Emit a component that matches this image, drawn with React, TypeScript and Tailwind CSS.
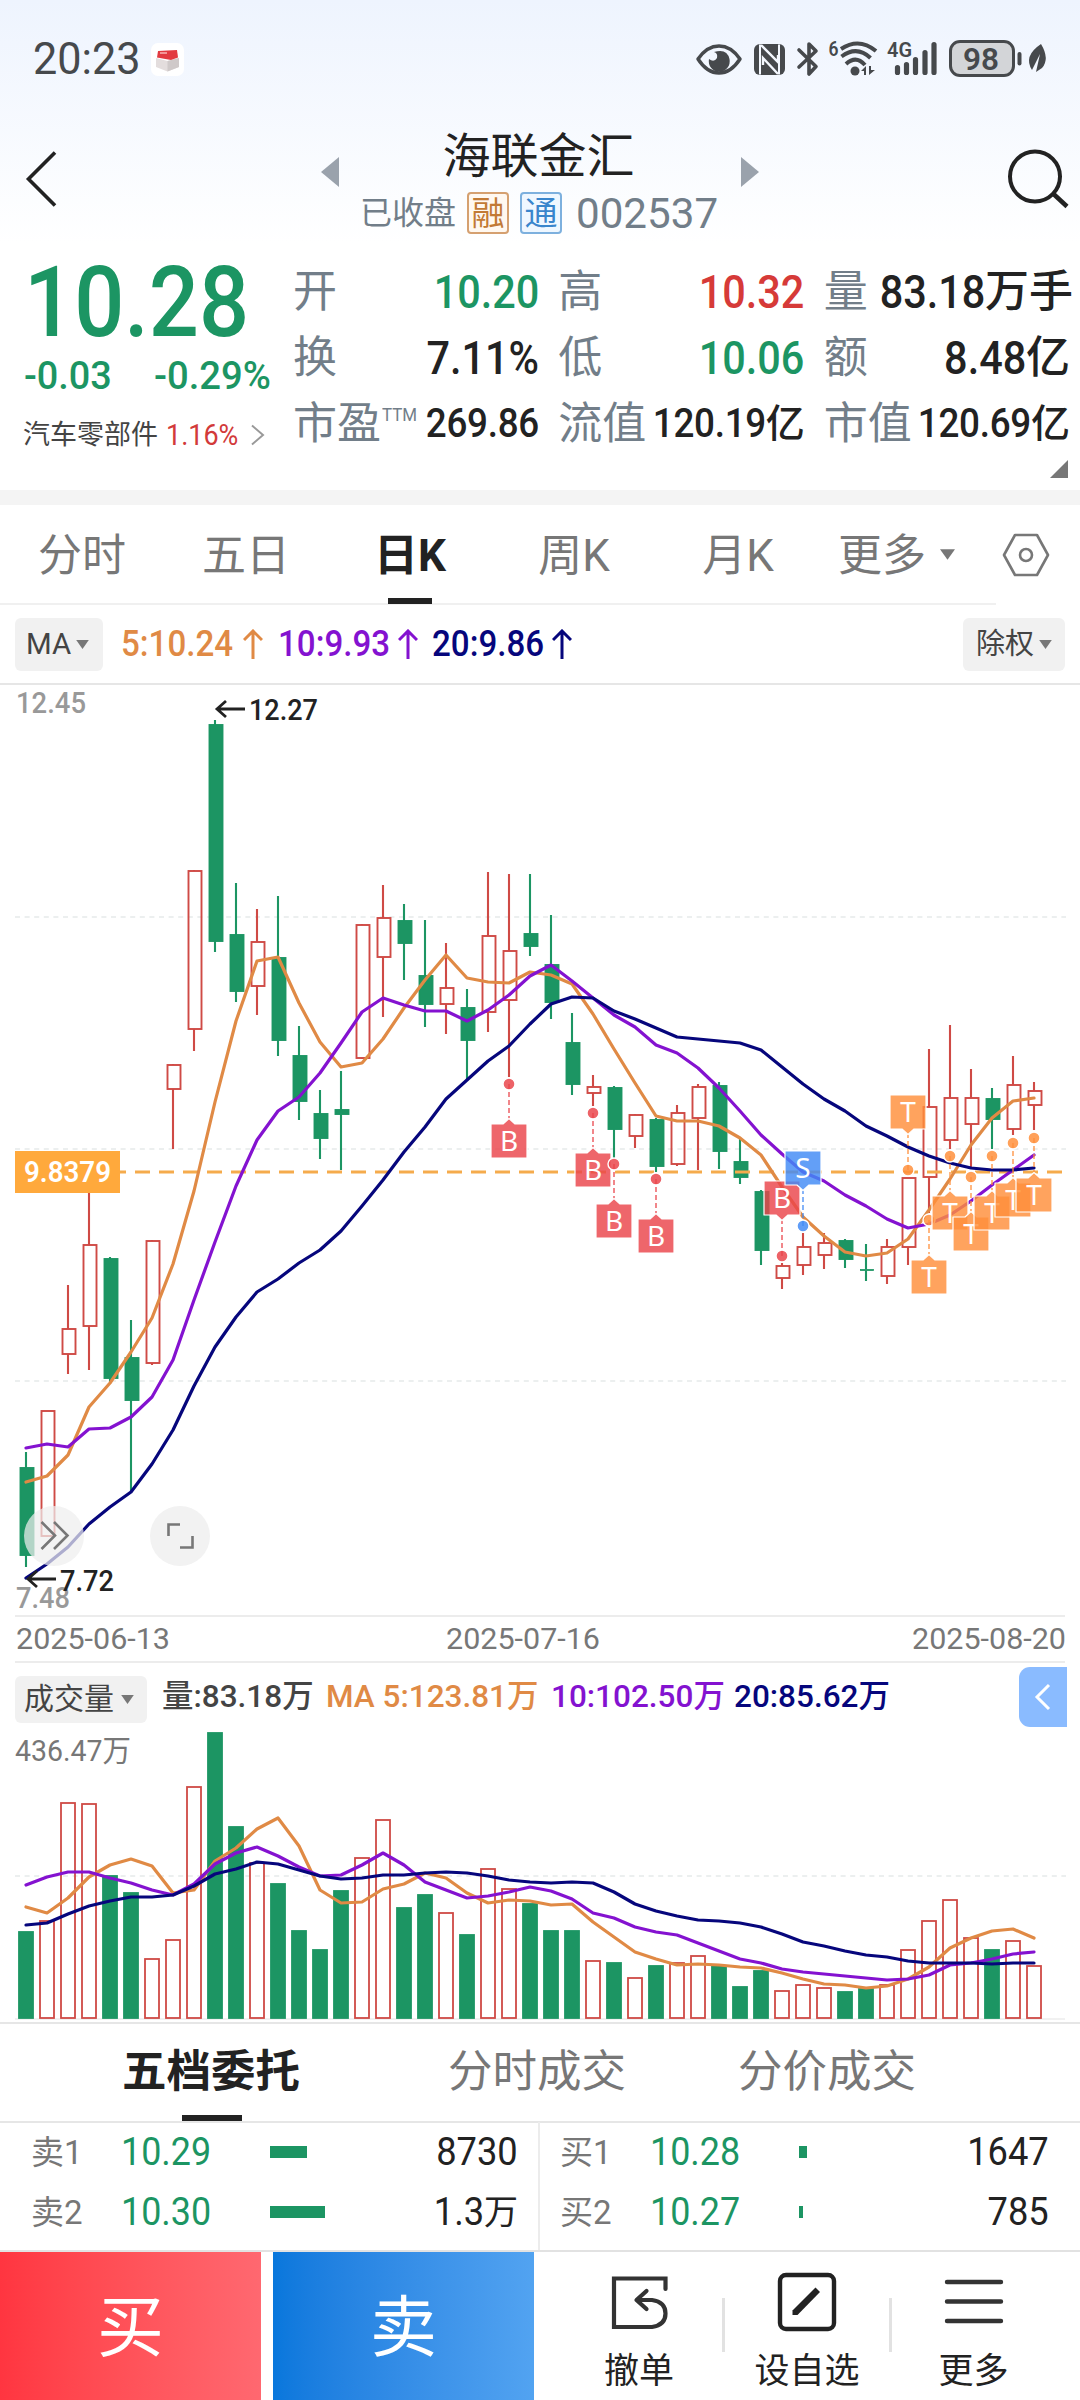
import React from 'react';
import clsx from 'clsx';

// [high, body top, body bottom, low, rising]
const candles: [number, number, number, number, 0 | 1][] = [
  [1452, 1468, 1555, 1567, 0], [1411, 1411, 1536, 1537, 1], [1285, 1329, 1354, 1374, 1],
  [1188, 1245, 1326, 1370, 1], [1257, 1259, 1378, 1382, 0], [1320, 1358, 1400, 1492, 0],
  [1240, 1241, 1363, 1365, 1], [1064, 1065, 1089, 1149, 1], [870, 871, 1029, 1051, 1],
  [720, 725, 941, 952, 0], [883, 935, 991, 1002, 0], [909, 942, 986, 1015, 1],
  [896, 958, 1040, 1056, 0], [1026, 1056, 1101, 1120, 0], [1090, 1114, 1138, 1159, 0],
  [1071, 1110, 1114, 1170, 0], [924, 925, 1058, 1059, 1], [885, 918, 957, 1017, 1],
  [904, 921, 943, 980, 0], [920, 976, 1004, 1027, 0], [943, 988, 1004, 1034, 1],
  [989, 1008, 1040, 1079, 0], [872, 936, 1012, 1032, 1], [874, 951, 1000, 1077, 1],
  [874, 934, 946, 956, 0], [915, 965, 1002, 1019, 0], [1013, 1043, 1084, 1095, 0],
  [1075, 1087, 1093, 1106, 1], [1086, 1088, 1129, 1158, 0], [1114, 1115, 1136, 1148, 1],
  [1118, 1120, 1166, 1172, 0], [1105, 1113, 1164, 1166, 1], [1084, 1087, 1118, 1170, 1],
  [1082, 1086, 1151, 1169, 0], [1137, 1162, 1177, 1184, 0], [1190, 1192, 1250, 1265, 0],
  [1263, 1266, 1278, 1289, 1], [1233, 1247, 1265, 1275, 1], [1233, 1243, 1255, 1269, 1],
  [1239, 1241, 1259, 1268, 0], [1244, 1269.5, 1270.5, 1281, 0], [1239, 1247, 1276, 1284, 1],
  [1178, 1178, 1247, 1265, 1], [1049, 1107, 1177, 1213, 1], [1025, 1098, 1140, 1149, 1],
  [1069, 1098, 1124, 1167, 1], [1088, 1099, 1119, 1149, 0], [1056, 1085, 1129, 1135, 1],
  [1082, 1091, 1105, 1130, 1],
];

const ma5 = [1482, 1476, 1455, 1407, 1383, 1352, 1318, 1264, 1191, 1102, 1021, 961, 957, 1003, 1042, 1067, 1063, 1039, 1008, 980, 955, 978, 982, 983, 972, 975, 984, 1014, 1049, 1083, 1116, 1121, 1121, 1126, 1138, 1155, 1187, 1217, 1236, 1252, 1256, 1253, 1239, 1210, 1179, 1145, 1118, 1101, 1098];
const ma10 = [1448, 1444, 1447, 1429, 1428, 1417, 1397, 1360, 1300, 1242, 1186, 1140, 1111, 1097, 1073, 1043, 1012, 998, 1005, 1011, 1011, 1021, 1010, 995, 976, 965, 981, 998, 1015, 1027, 1045, 1053, 1068, 1088, 1111, 1135, 1154, 1172, 1181, 1195, 1206, 1219, 1228, 1224, 1215, 1201, 1185, 1170, 1155];
const ma20 = [1578, 1564, 1547, 1524, 1507, 1492, 1464, 1430, 1386, 1347, 1317, 1292, 1279, 1263, 1250, 1231, 1206, 1180, 1152, 1127, 1099, 1080, 1061, 1046, 1024, 1004, 997, 998, 1011, 1019, 1028, 1037, 1039, 1041, 1043, 1050, 1067, 1084, 1099, 1111, 1126, 1136, 1147, 1156, 1163, 1168, 1170, 1170, 1168];

const volumes = [1931, 1920, 1802, 1803, 1875, 1892, 1958, 1939, 1786, 1732, 1826, 1862, 1883, 1930, 1949, 1890, 1857, 1819, 1907, 1894, 1912, 1934, 1868, 1888, 1903, 1930, 1930, 1960, 1962, 1977, 1965, 1962, 1955, 1965, 1986, 1970, 1990, 1984, 1987, 1991, 1988, 1984, 1949, 1920, 1899, 1937, 1949, 1940, 1965];
const vol5 = [1907, 1913, 1898, 1877, 1865, 1859, 1866, 1893, 1890, 1861, 1848, 1829, 1818, 1846, 1890, 1903, 1902, 1889, 1884, 1873, 1878, 1893, 1903, 1900, 1901, 1905, 1904, 1922, 1937, 1952, 1959, 1965, 1964, 1965, 1967, 1968, 1973, 1979, 1984, 1985, 1988, 1986, 1979, 1967, 1948, 1938, 1931, 1929, 1938];
const vol10 = [1885, 1877, 1872, 1872, 1878, 1883, 1890, 1895, 1884, 1864, 1853, 1847, 1856, 1867, 1876, 1875, 1865, 1853, 1865, 1882, 1890, 1898, 1896, 1892, 1887, 1891, 1899, 1913, 1918, 1927, 1932, 1935, 1943, 1951, 1959, 1963, 1969, 1972, 1974, 1976, 1978, 1980, 1979, 1975, 1965, 1963, 1959, 1954, 1952];
const vol20 = [1925, 1923, 1914, 1906, 1901, 1897, 1897, 1895, 1886, 1874, 1869, 1862, 1864, 1870, 1876, 1879, 1878, 1875, 1875, 1873, 1872, 1873, 1876, 1880, 1882, 1883, 1882, 1883, 1892, 1904, 1911, 1916, 1920, 1921, 1923, 1927, 1934, 1942, 1946, 1951, 1955, 1957, 1961, 1963, 1963, 1963, 1964, 1963, 1963];

// [candle index, dot y, letter, box above the dot]
const markers: [number, number, 'B' | 'S' | 'T', boolean][] = [
  [23, 1084, 'B', false], [27, 1113, 'B', false], [28, 1164, 'B', false], [30, 1179, 'B', false],
  [36, 1256, 'B', true], [37, 1226, 'S', true], [42, 1170, 'T', true], [43, 1220, 'T', false],
  [44, 1156, 'T', false], [45, 1177, 'T', false], [46, 1156, 'T', false], [47, 1143, 'T', false],
  [48, 1138, 'T', false],
];

const markerColor = { B: '#ea444a', S: '#418af5', T: '#ff8f3a' };

const GREEN = '#1c9563';
const RED = '#cf4a45';

const cx = (i: number) => 26 + i * 21;
const toPoints = (ys: number[]) => ys.map((y, i) => `${cx(i)},${y}`).join(' ');

function Line({ ys, color }: { ys: number[]; color: string }) {
  return <polyline points={toPoints(ys)} fill="none" stroke={color} strokeWidth="3.2" strokeLinejoin="round" strokeLinecap="round" />;
}

interface ChartTextProps {
  x: number;
  y: number;
  w: number;
  fill: string;
  size?: number;
  weight?: number;
  children: string;
}

function ChartText({ x, y, w, fill, size = 30, weight = 400, children }: ChartTextProps) {
  return (
    <text x={x} y={y} textLength={w} lengthAdjust="spacingAndGlyphs" fill={fill} fontSize={size} fontWeight={weight}>
      {children}
    </text>
  );
}

function Marker({ index, y, letter, above }: { index: number; y: number; letter: 'B' | 'S' | 'T'; above: boolean }) {
  const x = cx(index);
  const color = markerColor[letter];
  const top = above ? y - 75 : y + 40;
  const edge = above ? top + 34 : top;
  const tip = above ? edge + 5.5 : edge - 5.5;
  const box = above
    ? `M${x - 18} ${top}h36v34h-12l-6 5.5l-6 -5.5h-12z`
    : `M${x - 18} ${top}h12l6 -5.5l6 5.5h12v34h-36z`;
  return (
    <g>
      <path d={`M${x} ${y}V${tip}`} stroke={color} strokeWidth="1.6" strokeDasharray="5 3" opacity="0.8" />
      <circle cx={x} cy={y} r="6" fill={color} stroke="#fff" strokeWidth="1.4" fillOpacity="0.84" />
      <path d={box} fill={color} fillOpacity="0.82" stroke="#fff" strokeWidth="1.2" strokeLinejoin="round" />
      <text x={x} y={top + 27} textAnchor="middle" fill="#fff" fontSize="28" fontFamily="Noto Sans">
        {letter}
      </text>
    </g>
  );
}

function PriceChart() {
  return (
    <svg viewBox="0 685 1080 979" className="block w-[1080px] h-[979px]">
      {[917, 1149, 1381].map((y) => (
        <path key={y} d={`M15 ${y}H1066`} stroke="#ecefef" strokeWidth="1.8" strokeDasharray="5 4.6" />
      ))}
      <path d="M15 1616H1065M15 1662H1065" stroke="#ececec" strokeWidth="2" />
      <ChartText x={16} y={713} w={70} fill="#999" weight={500}>12.45</ChartText>
      <ChartText x={16} y={1608} w={54} fill="#999" weight={500}>7.48</ChartText>
      {candles.map(([high, top, bottom, low, up], i) => (
        <g key={i} stroke={up ? RED : GREEN}>
          <path d={`M${cx(i)} ${high}V${top}M${cx(i)} ${bottom}V${low}`} strokeWidth="2.1" />
          <rect
            x={cx(i) - 5.5}
            y={top}
            width="13"
            height={bottom - top}
            fill={up ? 'none' : GREEN}
            strokeWidth={bottom - top < 2 ? 0.8 : 1.9}
          />
        </g>
      ))}
      <path d="M15 1172H1065" stroke="#f5ab4c" strokeWidth="3" strokeDasharray="15 9" />
      <Line ys={ma5} color="#e08a45" />
      <Line ys={ma10} color="#8412d0" />
      <Line ys={ma20} color="#06067c" />
      <rect x="15" y="1151" width="105" height="42" fill="#ffa93c" />
      <ChartText x={24} y={1182} w={87} fill="#fff" weight={600}>9.8379</ChartText>
      {markers.map(([index, y, letter, above]) => (
        <Marker key={index} index={index} y={y} letter={letter} above={above} />
      ))}
      <g fill="none" stroke="#222" strokeWidth="2.8">
        <path d="M245 709H217M226 701L217 709L226 717" />
        <path d="M56 1579H28M37 1571L28 1579L37 1587" />
      </g>
      <ChartText x={249} y={720} w={69} fill="#222" weight={500}>12.27</ChartText>
      <ChartText x={60} y={1591} w={54} fill="#222" weight={500}>7.72</ChartText>
      <circle cx="54" cy="1536" r="30" fill="#efefef" fillOpacity="0.72" />
      <circle cx="180" cy="1536" r="30" fill="#f2f2f2" />
      <g fill="none" stroke="#777" strokeWidth="2.6">
        <path d="M41.500 1522L55 1535.500L41.500 1549M54 1522L67.500 1535.500L54 1549" />
        <path d="M168.500 1536V1524.500H180M192.500 1536V1547.500H180" />
      </g>
      <ChartText x={16} y={1649} w={154} fill="#777">2025-06-13</ChartText>
      <ChartText x={446} y={1649} w={154} fill="#777">2025-07-16</ChartText>
      <ChartText x={912} y={1649} w={154} fill="#777">2025-08-20</ChartText>
    </svg>
  );
}

function VolumeChart() {
  return (
    <svg viewBox="0 1728 1080 294" className="block w-[1080px] h-[294px]">
      <path d="M15 1876H1066" stroke="#ecefef" strokeWidth="1.8" strokeDasharray="5 4.6" />
      <path d="M15 2019H1065" stroke="#ececec" strokeWidth="1.5" />
      <ChartText x={15} y={1761} w={116} fill="#777">436.47万</ChartText>
      {volumes.map((top, i) => {
        const up = candles[i][4];
        return (
          <rect
            key={i}
            x={cx(i) - 7}
            y={top + 1}
            width="14"
            height={2017 - top}
            fill={up ? 'none' : GREEN}
            stroke={up ? RED : GREEN}
            strokeWidth="1.8"
          />
        );
      })}
      <Line ys={vol5} color="#e08a45" />
      <Line ys={vol10} color="#8412d0" />
      <Line ys={vol20} color="#06067c" />
    </svg>
  );
}

function Caret({ className }: { className?: string }) {
  return (
    <svg viewBox="0 0 14 10" className={clsx('shrink-0 w-[13px] h-[9px]', className)}>
      <path d="M0 0H14L7 10z" fill="#777" />
    </svg>
  );
}

function StatusBar() {
  return (
    <div className="flex items-center h-[118px] pl-[33px] text-[#46494c]">
      <div className="w-[118px] text-[45px]">
        <span className="inline-block origin-left scale-x-[0.96]">20:23</span>
      </div>
      <svg viewBox="0 0 33 33" className="w-[33px] h-[33px]">
        <rect width="33" height="33" rx="7" fill="#fff" />
        <path d="M5 15L16.500 18L28 15V24L16.500 28.500L5 24z" fill="#e3dddd" />
        <path d="M16.500 18L28 15V24L16.500 28.500z" fill="#cfc9c9" />
        <path d="M7 8L26 7L27 14.500L20 17L6 14.500z" fill="#e23a40" />
        <path d="M9 10H16" stroke="#f7b5b5" strokeWidth="1.5" />
      </svg>
      <svg viewBox="690 34 370 48" className="ml-[506px] w-[370px] h-[48px]">
        <g fill="none" stroke="#46494c" strokeWidth="3.5">
          <path d="M698 58Q707 45 719 45T740 58Q731 72 719 72T698 58z" strokeLinejoin="round" />
          <path d="M799 49L816 65.500L809 73V43L816 50L799 66" strokeWidth="3.6" strokeLinejoin="round" strokeLinecap="round" />
          <path d="M841 48Q859 36 876 50" strokeWidth="4" />
          <path d="M841.500 55.500Q857 44 870.500 57" strokeWidth="4" />
          <path d="M846 63Q856 54 865 64" strokeWidth="4" />
        </g>
        <path d="M709 58Q714 62 717 57Q718 52 714 51Q727 47 729.500 58A10.500 10.500 0 1 1 709 58z" fill="#46494c" />
        <rect x="754" y="43" width="31" height="31" rx="6" fill="#46494c" />
        <path d="M760 43.500V73.500M779 73.500V43.500" stroke="#f3f7fe" strokeWidth="2" fill="none" />
        <path d="M761 44L778 61V54M778 73L763 57V64" stroke="#f3f7fe" strokeWidth="2.4" fill="none" />
        <circle cx="855" cy="70" r="4.5" fill="#46494c" />
        <path d="M861 70L866 65V74H864V70zM869 65V74L875 69H871V65z" fill="#46494c" />
        <text x="828.5" y="55" fontSize="21" fontWeight="600" textLength="10" lengthAdjust="spacingAndGlyphs" fill="#46494c">6</text>
        <text x="887" y="56" fontSize="21" fontWeight="600" textLength="25" lengthAdjust="spacingAndGlyphs" fill="#46494c">4G</text>
        <path d="M897.500 66.500V71.500M906.500 63.500V71.500M915.500 58.500V71.500M925 51.500V71.500M934 43.500V71.500" stroke="#46494c" strokeWidth="5.2" strokeLinecap="round" />
        <rect x="950.5" y="40.5" width="63" height="34" rx="9.5" fill="#d3d5d8" stroke="#46494c" strokeWidth="3" />
        <text x="963" y="69" fontSize="32" fontWeight="600" textLength="36" lengthAdjust="spacingAndGlyphs" fill="#46494c">98</text>
        <path d="M1019.500 53V62.500" stroke="#46494c" strokeWidth="4" strokeLinecap="round" />
        <path d="M1041 43Q1050 58 1042 67L1036 71L1040 53L1032 69Q1023 55 1041 43z" fill="#46494c" />
      </svg>
    </div>
  );
}

function Header() {
  return (
    <div className="flex h-[126px] items-start">
      <svg viewBox="0 0 34 60" className="ml-[25px] mt-[31px] w-[34px] h-[60px]">
        <path d="M30 3.500L3.500 30L30 56.500" fill="none" stroke="#222" strokeWidth="3.6" />
      </svg>
      <svg viewBox="0 0 18 30" className="ml-[262px] mt-[39px] w-[18px] h-[30px]">
        <path d="M18 0V30L0 15z" fill="#9aa2ac" />
      </svg>
      <div className="w-[402px] flex flex-col items-center">
        <div className="mt-[15px] mr-[3px] text-[48px] leading-[48px] text-[#222]">海联金汇</div>
        <div className="mt-[11px] flex h-[42px] w-[402px] items-center pl-[21px] leading-none text-[#727e89]">
          <span className="w-[107px] text-[32px]">已收盘</span>
          <span className="flex size-[42px] items-center justify-center rounded-[4px] border-2 border-[#d5a070] bg-[#fff8f0] text-[33px] text-[#c27a35]">融</span>
          <span className="ml-[11px] flex size-[42px] items-center justify-center rounded-[4px] border-2 border-[#7db0de] bg-[#eff7ff] text-[33px] text-[#3985cc]">通</span>
          <span className="ml-[14px] text-[43px] origin-left scale-x-[0.98]">002537</span>
        </div>
      </div>
      <svg viewBox="0 0 18 30" className="mt-[39px] w-[18px] h-[30px]">
        <path d="M0 0V30L18 15z" fill="#9aa2ac" />
      </svg>
      <svg viewBox="0 0 64 62" className="ml-[247px] mt-[29px] w-[64px] h-[62px]">
        <circle cx="29" cy="29.5" r="25" fill="none" stroke="#222" strokeWidth="4" />
        <path d="M47 46.500L61 59.500" stroke="#222" strokeWidth="4.5" />
      </svg>
    </div>
  );
}

interface StatProps {
  label: string;
  value: string;
  unit?: string;
  sup?: string;
  color?: string;
  small?: boolean;
}

const stats: StatProps[] = [
  { label: '开', value: '10.20', color: 'text-[#1c9563]' },
  { label: '高', value: '10.32', color: 'text-[#d63a38]' },
  { label: '量', value: '83.18', unit: '万手' },
  { label: '换', value: '7.11%' },
  { label: '低', value: '10.06', color: 'text-[#1c9563]' },
  { label: '额', value: '8.48', unit: '亿' },
  { label: '市盈', value: '269.86', sup: 'TTM', small: true },
  { label: '流值', value: '120.19', unit: '亿', small: true },
  { label: '市值', value: '120.69', unit: '亿', small: true },
];

function Stat({ label, value, unit, sup, small, color = 'text-[#222]' }: StatProps) {
  return (
    <div className="relative flex h-[66px] items-center justify-between leading-none whitespace-nowrap">
      <span className="-ml-px text-[44px] text-[#727e89]">{label}</span>
      {sup && <span className="absolute left-[88px] top-[15px] origin-left scale-x-[0.94] text-[18px] text-[#727e89]">{sup}</span>}
      <span className={clsx('flex items-center font-medium', color)}>
        <span
          className={clsx(
            'inline-block',
            small ? 'origin-right scale-x-[0.92] -ml-[10px] text-[40px] tracking-[-0.3px]' : 'origin-right scale-x-[0.9] text-[46px]'
          )}
        >
          {value}
        </span>
        {unit && <span className={small ? 'text-[39px]' : 'text-[44px]'}>{unit}</span>}
      </span>
    </div>
  );
}

function Quote() {
  return (
    <div className="flex h-[246px] items-start">
      <div className="w-[294px] whitespace-nowrap leading-none text-[#1c9563]">
        <div className="ml-[24px] mt-[10px] h-[96px] origin-left scale-x-[0.9] text-[98px] font-medium">10.28</div>
        <div className="mt-[3px] flex h-[46px] items-center pl-[24px] text-[39px] font-medium">
          <span className="w-[130px] origin-left scale-x-[0.97]">-0.03</span>
          <span className="origin-left scale-x-[0.98]">-0.29%</span>
        </div>
        <div className="mt-[16px] flex h-[40px] items-center pl-[23px]">
          <span className="w-[143px] text-[27px] text-[#444]">汽车零部件</span>
          <span className="w-[84px] origin-left scale-x-[0.93] text-[29px] text-[#d23a3a]">1.16%</span>
          <svg viewBox="0 0 16 22" className="w-[16px] h-[22px]">
            <path d="M2 1.500L13 11L2 20.500" fill="none" stroke="#999" strokeWidth="2" />
          </svg>
        </div>
      </div>
      <div className="relative grid grid-cols-3 gap-x-[20px] w-[776px] pt-[15px]">
        {stats.map((s) => (
          <Stat key={s.label} {...s} />
        ))}
        <svg viewBox="0 0 18 18" className="absolute right-[2px] top-[216px] w-[18px] h-[18px]">
          <path d="M18 0V18H0z" fill="#777" />
        </svg>
      </div>
    </div>
  );
}

function PeriodTabs() {
  return (
    <div className="flex h-[100px] text-[44px] leading-none text-[#777]">
      <div className="flex w-[996px] border-b-2 border-[#f0f0f0] pt-[4px]">
        <div className="flex w-[164px] items-center justify-center">分时</div>
        <div className="flex w-[164px] items-center justify-center">五日</div>
        <div className="relative flex w-[164px] items-center justify-center font-bold text-[#222]">
          日K
          <span className="absolute bottom-[-1px] left-[60px] h-[6px] w-[44px] bg-[#222]" />
        </div>
        <div className="flex w-[164px] items-center justify-center">周K</div>
        <div className="flex w-[164px] items-center justify-center">月K</div>
        <div className="flex items-center pl-[18px]">
          更多
          <Caret className="ml-[14px] w-[15px]! h-[11px]! -mt-[3px]" />
        </div>
      </div>
      <svg viewBox="0 0 48 44" className="ml-[6px] mt-[28px] w-[48px] h-[44px]">
        <path d="M13 2H35L46 22L35 42H13L2 22z" fill="none" stroke="#777" strokeWidth="2.6" strokeLinejoin="round" />
        <circle cx="24" cy="22" r="6" fill="none" stroke="#777" strokeWidth="2.6" />
      </svg>
    </div>
  );
}

function UpArrow() {
  return (
    <svg viewBox="0 0 20 30" className="w-[20px] h-[30px] -mt-[1px]">
      <path d="M10 30V2M1 11L10 2L19 11" fill="none" stroke="currentColor" strokeWidth="3" />
    </svg>
  );
}

function MaLegend() {
  return (
    <div className="flex h-[80px] items-center border-b-2 border-[#e6e6e6] pl-[15px] pr-[15px] leading-none">
      <div className="flex h-[53px] w-[88px] items-center rounded-[6px] bg-[#f1f1f1] pl-[11px] text-[30px] text-[#444]">
        <span className="w-[50px] origin-left scale-x-[0.98]">MA</span>
        <Caret />
      </div>
      <div className="flex items-center pl-[18px] text-[36px] font-medium">
        <span className="flex w-[157px] items-center text-[#e08a45]">
          <span className="w-[122px] origin-left scale-x-[0.92]">5:10.24</span>
          <UpArrow />
        </span>
        <span className="flex w-[154px] items-center text-[#8412d0]">
          <span className="w-[120px] origin-left scale-x-[0.92]">10:9.93</span>
          <UpArrow />
        </span>
        <span className="flex items-center text-[#06067c]">
          <span className="w-[120px] origin-left scale-x-[0.92]">20:9.86</span>
          <UpArrow />
        </span>
      </div>
      <div className="ml-auto flex h-[53px] w-[102px] items-center rounded-[6px] bg-[#f1f1f1] pl-[13px] text-[29px] text-[#444]">
        <span className="w-[63px]">除权</span>
        <Caret />
      </div>
    </div>
  );
}

function VolumeLegend() {
  return (
    <div className="flex h-[64px] items-center whitespace-nowrap pl-[15px] pt-[2px] leading-none">
      <div className="mt-[4px] flex h-[47px] w-[132px] items-center rounded-[6px] bg-[#f1f1f1] pl-[9px] text-[30px] text-[#444]">
        <span className="w-[97px]">成交量</span>
        <Caret />
      </div>
      <div className="flex items-center pl-[15px] text-[31.5px] font-medium">
        <span className="w-[164px] text-[#444]">量:83.18万</span>
        <span className="w-[225px] text-[#e08a45]">MA 5:123.81万</span>
        <span className="w-[183px] text-[#8412d0]">10:102.50万</span>
        <span className="text-[#06067c]">20:85.62万</span>
      </div>
      <div className="ml-auto mr-[13px] flex h-[60px] w-[48px] items-center justify-center rounded-l-[11px] bg-[#8abbff]">
        <svg viewBox="0 0 18 28" className="w-[18px] h-[28px]">
          <path d="M15 2L3 14L15 26" fill="none" stroke="#fff" strokeWidth="3" />
        </svg>
      </div>
    </div>
  );
}

function BookTabs() {
  return (
    <div className="flex h-[101px] border-y-2 border-[#e6e6e6] text-[44.5px] leading-none text-[#777]">
      <div className="relative ml-[122px] flex w-[326px] items-center font-bold text-[#222]">
        五档委托
        <span className="absolute bottom-0 left-[60px] h-[6px] w-[60px] bg-[#222]" />
      </div>
      <div className="flex w-[290px] items-center">分时成交</div>
      <div className="flex items-center">分价成交</div>
    </div>
  );
}

function BookRow({ label, price, bar, volume, unit }: { label: string; price: string; bar: number; volume: string; unit?: string }) {
  return (
    <div className="flex h-[60px] items-center leading-none">
      <span className="w-[90px] text-[33px] text-[#777]">{label}</span>
      <span className="w-[149px] origin-left scale-x-[0.92] text-[39px] text-[#1c9563]">{price}</span>
      <span className="h-[12px] bg-[#1c9563]" style={{ width: bar }} />
      <span className="ml-auto flex items-center text-[#222]">
        <span className="origin-right scale-x-[0.93] text-[39px]">{volume}</span>
        {unit && <span className="text-[34px]">{unit}</span>}
      </span>
    </div>
  );
}

function OrderBook() {
  return (
    <div className="-mt-px flex h-[128px]">
      <div className="w-[540px] border-r-2 border-[#ececec] pl-[31px] pr-[20px]">
        <BookRow label="卖1" price="10.29" bar={37} volume="8730" />
        <BookRow label="卖2" price="10.30" bar={55} volume="1.3" unit="万" />
      </div>
      <div className="w-[540px] pl-[20px] pr-[31px]">
        <BookRow label="买1" price="10.28" bar={8} volume="1647" />
        <BookRow label="买2" price="10.27" bar={4} volume="785" />
      </div>
    </div>
  );
}

function BottomBar() {
  return (
    <div className="flex h-[150px] border-t-2 border-[#e2e2e2] leading-none text-[#222]">
      <button className="flex w-[261px] items-center justify-center bg-linear-to-r from-[#ff3540] to-[#ff6870] pt-[4px] text-[67px] text-white">买</button>
      <button className="ml-[12px] flex w-[261px] items-center justify-center bg-linear-to-r from-[#0877dc] to-[#52a3f1] pt-[4px] text-[67px] text-white">卖</button>
      <div className="flex flex-1 items-start pl-[22px] text-[35px]">
        <div className="flex w-[166px] flex-col items-center">
          <svg viewBox="612 2272 58 60" className="mt-[20px] w-[58px] h-[60px]">
            <g fill="none" stroke="#333" strokeWidth="4.2" strokeLinecap="round">
              <path d="M667.500 2289V2278.500H616V2327H654Q667.500 2325 667.500 2313.500T654 2300H640" />
              <path d="M648.500 2291L638.500 2300L648.500 2309" strokeLinejoin="round" />
            </g>
          </svg>
          <span className="mt-[22px]">撤单</span>
        </div>
        <span className="mt-[46px] h-[54px] w-[3px] bg-[#e2e2e2]" />
        <div className="flex w-[164px] flex-col items-center">
          <svg viewBox="0 0 60 60" className="mt-[20px] w-[60px] h-[60px]">
            <rect x="3" y="3" width="54" height="54" rx="6" fill="none" stroke="#222" strokeWidth="4.4" />
            <path d="M15.500 43V38.500L38.500 15.500L43 20L20.500 43z" fill="#222" />
          </svg>
          <span className="mt-[22px]">设自选</span>
        </div>
        <span className="mt-[46px] h-[54px] w-[3px] bg-[#e2e2e2]" />
        <div className="flex w-[163px] flex-col items-center">
          <svg viewBox="0 0 60 60" className="mt-[20px] w-[60px] h-[60px]">
            <path d="M3 10H57M3 29.500H57M3 49H57" stroke="#333" strokeWidth="4.4" strokeLinecap="round" />
          </svg>
          <span className="mt-[22px]">更多</span>
        </div>
      </div>
    </div>
  );
}

function App() {
  return (
    <div className="w-[1080px] h-[2400px] overflow-hidden bg-white font-['Roboto','Noto_Sans_CJK_SC',sans-serif]">
      <div className="bg-linear-to-b from-[#eef4fe] to-white">
        <StatusBar />
        <Header />
      </div>
      <Quote />
      <div className="h-[15px] bg-[#f4f4f4]" />
      <PeriodTabs />
      <MaLegend />
      <PriceChart />
      <VolumeLegend />
      <VolumeChart />
      <BookTabs />
      <OrderBook />
      <BottomBar />
    </div>
  );
}

export default App;
